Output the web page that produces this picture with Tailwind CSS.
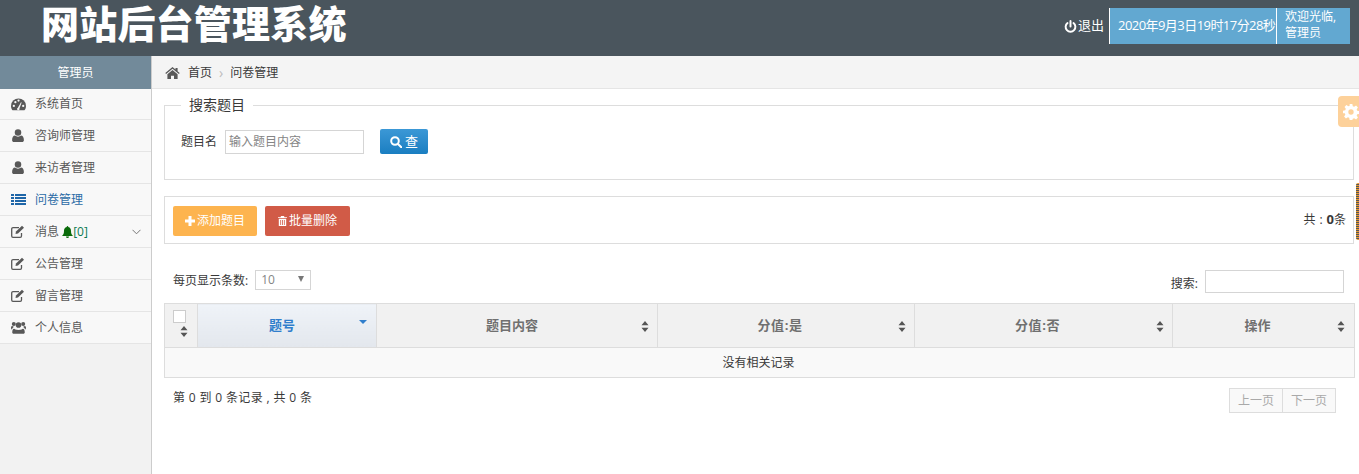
<!DOCTYPE html>
<html lang="zh-CN">
<head>
<meta charset="utf-8">
<script src="https://cdn.jsdelivr.net/npm/@tailwindcss/browser@4"></script>
</head>
<body class="h-[474px] w-[1359px] overflow-hidden bg-white font-['Open_Sans','Noto_Sans_CJK_SC',sans-serif] text-[12px] text-[#393939]">
<header class="flex h-[56px] items-center bg-[#4a555d]">
  <h1 class="ml-[41px] self-start font-['Noto_Sans_CJK_SC',sans-serif] text-[38px] leading-[44px] font-black tracking-[0.2px] text-white">网站后台管理系统</h1>
  <div class="ml-auto mr-[9px] flex h-[36px] items-center self-start mt-[8px] text-[13px] text-white">
    <svg class="mr-[1px] h-[13px] w-[13px]" viewBox="0 0 24 24" fill="none" stroke="white" stroke-width="3.6" stroke-linecap="round"><path d="M12 2v10"/><path d="M6.500 5.500a9 9 0 1 0 11 0"/></svg>
    <span class="mr-[5px]">退出</span>
    <div class="flex h-[36px] w-[167px] items-center border-l border-white bg-[#62a8d1] pl-[8px] tracking-[-0.55px] whitespace-nowrap">2020年9月3日19时17分28秒</div>
    <div class="h-[36px] w-[74px] border-l border-white bg-[#62a8d1] pl-[8px] text-[12px] leading-[16px] pt-[1px]">欢迎光临,<br>管理员</div>
  </div>
</header>
<div class="flex h-[418px]">
  <aside class="h-full w-[152px] shrink-0 border-r border-[#cccccc] bg-[#f2f2f2]">
    <div class="flex h-[33px] items-center justify-center bg-[#728a9a] text-white">管理员</div>
    <nav class="text-[#585858]">
      <a class="flex h-[31px] items-center border-b border-[#e5e5e5] bg-[#f8f8f8]"><span class="flex w-[35px] justify-center pl-[1px]"><svg class="h-[14px] w-[15px]" viewBox="0 0 24 22" fill="#585858"><path d="M12 2A12 12 0 0 0 0 14c0 3 1 5 2.500 7h19C23 19 24 17 24 14A12 12 0 0 0 12 2z"/><g fill="#f8f8f8"><circle cx="4.500" cy="14" r="1.800"/><circle cx="7" cy="8" r="1.800"/><circle cx="12" cy="5.500" r="1.800"/><circle cx="19.500" cy="14" r="1.800"/><path d="M11 17l5-9 1 .5-3.500 9.500a2 2 0 1 1-2.500-1z"/></g></svg></span>系统首页</a>
      <a class="flex h-[32px] items-center border-b border-[#e5e5e5] bg-[#f8f8f8]"><span class="flex w-[35px] justify-center pl-[1px]"><svg class="h-[13px] w-[12px]" viewBox="0 0 20 22" fill="#585858"><circle cx="10" cy="6" r="5.500"/><path d="M0 19c0-5 2-8 5-8 1.500 1.200 3 2 5 2s3.500-.8 5-2c3 0 5 3 5 8 0 2-1.500 3-3 3H3c-1.500 0-3-1-3-3z"/></svg></span>咨询师管理</a>
      <a class="flex h-[32px] items-center border-b border-[#e5e5e5] bg-[#f8f8f8]"><span class="flex w-[35px] justify-center pl-[1px]"><svg class="h-[13px] w-[12px]" viewBox="0 0 20 22" fill="#585858"><circle cx="10" cy="6" r="5.500"/><path d="M0 19c0-5 2-8 5-8 1.500 1.200 3 2 5 2s3.500-.8 5-2c3 0 5 3 5 8 0 2-1.500 3-3 3H3c-1.500 0-3-1-3-3z"/></svg></span>来访者管理</a>
      <a class="flex h-[32px] items-center border-b border-[#e5e5e5] bg-[#f8f8f8] text-[#2b6ba6]"><span class="flex w-[35px] justify-center pl-[1px]"><svg class="h-[11px] w-[15px]" viewBox="0 0 15 11" fill="#1e66a8"><path d="M0 0h3v2H0zM4 0h11v2H4zM0 3h3v2H0zM4 3h11v2H4zM0 6h3v2H0zM4 6h11v2H4zM0 9h3v2H0zM4 9h11v2H4z"/></svg></span>问卷管理</a>
      <a class="flex h-[32px] items-center border-b border-[#e5e5e5] bg-[#f8f8f8]"><span class="flex w-[35px] justify-center pl-[1px]"><svg class="h-[13px] w-[14px]" viewBox="0 0 14 13" fill="none" stroke="#585858" stroke-width="1.300"><path d="M10.500 8v3a1.300 1.300 0 0 1-1.300 1.300H2A1.300 1.300 0 0 1 .7 11V4A1.300 1.300 0 0 1 2 2.700h6"/><path d="M4.500 9l.5-2.500L11 .8l2 2-6 5.700z" fill="#585858" stroke="none"/></svg></span>消息&nbsp;<svg class="h-[12px] w-[11px]" viewBox="0 0 11 12" fill="#0a6b0a"><path d="M5.500 0C6 0 6.300.4 6.300 1 8.300 1.400 9 3 9 5c0 2.500.7 3.500 2 5H0c1.300-1.500 2-2.500 2-5 0-2 .7-3.600 2.700-4C4.700.4 5 0 5.500 0zM4 10.500h3A1.500 1.500 0 0 1 4 10.500z"/></svg><span class="text-[#0a7a52]">[0]</span><svg class="ml-auto mr-[10px] h-[6px] w-[9px]" viewBox="0 0 9 6" fill="none" stroke="#777" stroke-width="1"><path d="M.5.800 4.500 4.800 8.500.8"/></svg></a>
      <a class="flex h-[32px] items-center border-b border-[#e5e5e5] bg-[#f8f8f8]"><span class="flex w-[35px] justify-center pl-[1px]"><svg class="h-[13px] w-[14px]" viewBox="0 0 14 13" fill="none" stroke="#585858" stroke-width="1.300"><path d="M10.500 8v3a1.300 1.300 0 0 1-1.300 1.300H2A1.300 1.300 0 0 1 .7 11V4A1.300 1.300 0 0 1 2 2.700h6"/><path d="M4.500 9l.5-2.500L11 .8l2 2-6 5.700z" fill="#585858" stroke="none"/></svg></span>公告管理</a>
      <a class="flex h-[32px] items-center border-b border-[#e5e5e5] bg-[#f8f8f8]"><span class="flex w-[35px] justify-center pl-[1px]"><svg class="h-[13px] w-[14px]" viewBox="0 0 14 13" fill="none" stroke="#585858" stroke-width="1.300"><path d="M10.500 8v3a1.300 1.300 0 0 1-1.300 1.300H2A1.300 1.300 0 0 1 .7 11V4A1.300 1.300 0 0 1 2 2.700h6"/><path d="M4.500 9l.5-2.500L11 .8l2 2-6 5.700z" fill="#585858" stroke="none"/></svg></span>留言管理</a>
      <a class="flex h-[32px] items-center border-b border-[#e5e5e5] bg-[#f8f8f8]"><span class="flex w-[35px] justify-center pl-[1px]"><svg class="h-[13px] w-[15px]" viewBox="0 0 24 20" fill="#585858"><circle cx="12" cy="6" r="4.500"/><circle cx="4.500" cy="4.500" r="3.200"/><circle cx="19.500" cy="4.500" r="3.200"/><path d="M5 12c1 0 2 2 7 2s6-2 7-2c2 0 3 2 3 6 0 1-1 2-2 2H4c-1 0-2-1-2-2 0-4 1-6 3-6z"/><path d="M0 10c0-1.500 1-2.500 2-2.500L5 9c-2 .5-3 2-3.500 4C.5 13 0 12 0 10zM24 10c0-1.500-1-2.500-2-2.500L19 9c2 .5 3 2 3.500 4 1 0 1.500-1 1.500-3z"/></svg></span>个人信息</a>
    </nav>
  </aside>
  <main class="relative min-w-0 flex-1 overflow-hidden">
    <div class="flex h-[33px] items-center border-b border-[#e5e5e5] bg-[#f4f4f4] pl-[13px] pt-[1px]">
      <svg class="mr-[8px] h-[12px] w-[15px]" viewBox="0 0 24 20" fill="#585858"><path d="M12 0l5 4V1.500h3.500V7L24 10l-1.300 1.500L12 3 1.300 11.500 0 10z"/><path d="M12 5l8.500 7v8H14.500v-5.500h-5V20H3.500v-8z"/></svg>
      <span>首页</span><span class="mx-[7px] text-[14px] leading-[12px] text-[#bbbbbb]">›</span><span>问卷管理</span>
    </div>

    <div class="pl-[12px] pr-[5px]">
      <fieldset class="mt-[7px] h-[84px] border border-[#dddddd] px-[16px]">
        <legend class="px-[8px] text-[14px] leading-[18px]">搜索题目</legend>
        <div class="mt-[15px] flex h-[25px] items-center">
          <label class="w-[44px]">题目名</label>
          <input class="h-[24px] w-[139px] border border-[#d5d5d5] bg-white px-[3px] text-[12px] placeholder:text-[#858585]" placeholder="输入题目内容">
          <button class="ml-[16px] flex h-[25px] w-[48px] items-center justify-center gap-[3px] rounded-[2px] bg-gradient-to-b from-[#3b98d6] to-[#197ec1] text-[13px] text-white"><svg class="h-[12px] w-[12px]" viewBox="0 0 12 12" fill="none" stroke="white" stroke-width="2"><circle cx="5" cy="5" r="3.800"/><path d="M8 8l3.300 3.300" stroke-linecap="round"/></svg>查</button>
        </div>
      </fieldset>

      <div class="mt-[16px] flex h-[48px] items-center border border-[#dddddd] pl-[8px] pr-[7px]">
        <button class="mt-[2px] flex h-[30px] w-[84px] items-center justify-center gap-[2px] rounded-[2px] bg-[#fdb44f] text-white"><svg class="h-[10px] w-[10px]" viewBox="0 0 10 10" fill="white"><path d="M3.500 0h3v3.500H10v3H6.500V10h-3V6.500H0v-3h3.500z"/></svg>添加题目</button>
        <button class="mt-[2px] ml-[8px] flex h-[30px] w-[85px] items-center justify-center gap-[2px] rounded-[2px] bg-[#d15b47] text-white"><svg class="h-[10px] w-[9px]" viewBox="0 0 9 10" fill="white"><path d="M3 0h3l.5 1.200H9V2H0v-.8h2.500zM.8 2.800h7.400V10H.8zM2.300 4v5h.8V4zM4.100 4v5h.8V4zM5.900 4v5h.8V4z" fill-rule="evenodd"/></svg>批量删除</button>
        <span class="ml-auto">共<span class="mx-[4px]">:</span><b class="text-[13px] font-bold">0</b>条</span>
      </div>

      <div class="mt-[25px] flex h-[24px] items-center pl-[9px] pr-[10px]">
        <span>每页显示条数:</span>
        <div class="relative mb-[3px] ml-[7px] flex h-[20px] w-[56px] items-center border border-[#d5d5d5] pl-[5px] text-[#858585]">10<span class="absolute top-[5px] right-[6px] h-0 w-0 border-x-[3.500px] border-t-[6px] border-x-transparent border-t-[#777777]"></span></div>
        <span class="ml-auto mr-[7px] mt-[5px]">搜索:</span>
        <input class="h-[23px] w-[139px] border border-[#d5d5d5] bg-white">
      </div>

      <table class="mt-[10px] w-[1190px] table-fixed border-collapse border border-[#dddddd]">
        <colgroup><col class="w-[33px]"><col class="w-[179px]"><col class="w-[281px]"><col class="w-[257px]"><col class="w-[258px]"><col class="w-[182px]"></colgroup>
        <thead>
          <tr class="h-[44px] bg-[#f1f1f1] text-[13px] text-[#707070]">
            <th class="relative border border-[#dddddd] align-top"><div class="mt-[6px] ml-[8px] h-[13px] w-[13px] border border-[#cccccc] bg-white"></div><svg class="absolute bottom-[10px] left-[15px] h-[11px] w-[8px]" viewBox="0 0 8 11" fill="#555"><path d="M4 0l3.500 4.300H.5zM4 11L.5 6.700h7z"/></svg></th>
            <th class="relative border border-[#dddddd] bg-gradient-to-b from-[#eff3f8] to-[#e3e7ed] pr-[10px] font-bold text-[#307ecc]">题号<svg class="absolute top-[16px] right-[9px] h-[4px] w-[8px]" viewBox="0 0 8 4" fill="#307ecc"><path d="M0 0h8L4 4z"/></svg></th>
            <th class="relative border border-[#dddddd] pr-[10px] font-bold">题目内容<svg class="absolute top-[17px] right-[8px] h-[11px] w-[8px]" viewBox="0 0 8 11" fill="#555"><path d="M4 0l3.500 4.300H.5zM4 11L.5 6.700h7z"/></svg></th>
            <th class="relative border border-[#dddddd] pr-[12px] font-bold tracking-[0.6px]">分值:是<svg class="absolute top-[17px] right-[8px] h-[11px] w-[8px]" viewBox="0 0 8 11" fill="#555"><path d="M4 0l3.500 4.300H.5zM4 11L.5 6.700h7z"/></svg></th>
            <th class="relative border border-[#dddddd] pr-[12px] font-bold tracking-[0.6px]">分值:否<svg class="absolute top-[17px] right-[8px] h-[11px] w-[8px]" viewBox="0 0 8 11" fill="#555"><path d="M4 0l3.500 4.300H.5zM4 11L.5 6.700h7z"/></svg></th>
            <th class="relative border border-[#dddddd] pr-[12px] font-bold">操作<svg class="absolute top-[17px] right-[9px] h-[11px] w-[8px]" viewBox="0 0 8 11" fill="#555"><path d="M4 0l3.500 4.300H.5zM4 11L.5 6.700h7z"/></svg></th>
          </tr>
        </thead>
        <tbody>
          <tr class="h-[30px] bg-[#f9f9f9]"><td colspan="6" class="border border-[#dddddd] pr-[2px] text-center">没有相关记录</td></tr>
        </tbody>
      </table>

      <div class="mt-[10px] flex items-start pl-[9px] pr-[18px]">
        <span class="mt-[1px] tracking-[0.35px]">第 0 到 0 条记录 , 共 0 条</span>
        <div class="ml-auto flex h-[25px] border border-[#dddddd] bg-[#f9f9f9] text-[#a9a9a9]">
          <span class="flex w-[53px] items-center justify-center border-r border-[#dddddd]">上一页</span>
          <span class="flex w-[52px] items-center justify-center">下一页</span>
        </div>
      </div>
    </div>

    <div class="absolute top-[40px] right-0 flex h-[31px] w-[21px] items-center justify-start rounded-l-[4px] bg-[#fdd19a] pl-[5px]">
      <svg class="h-[16px] w-[16px]" viewBox="0 0 24 24" fill="white"><path fill-rule="evenodd" d="M10 0h4l.7 3.400 2 .8L19.600 2.300l2.800 2.800-1.900 2.900.8 2 3.400.7v4l-3.400.7-.8 2 1.900 2.900-2.800 2.800-2.900-1.900-2 .8L14 24h-4l-.7-3.400-2-.8-2.900 1.900-2.800-2.800 1.900-2.900-.8-2L0 14v-4l3.400-.7.8-2-1.900-2.900 2.800-2.800 2.900 1.900 2-.8zM12 8a4 4 0 1 0 0 8 4 4 0 0 0 0-8z"/></svg>
    </div>
    <div class="absolute top-[127px] right-0 h-[57px] w-[3px] rounded-l-[2px] bg-[repeating-linear-gradient(180deg,#e69a2e_0,#e69a2e_1px,#555555_1px,#555555_2px)]"></div>
  </main>
</div>
</body>
</html>
